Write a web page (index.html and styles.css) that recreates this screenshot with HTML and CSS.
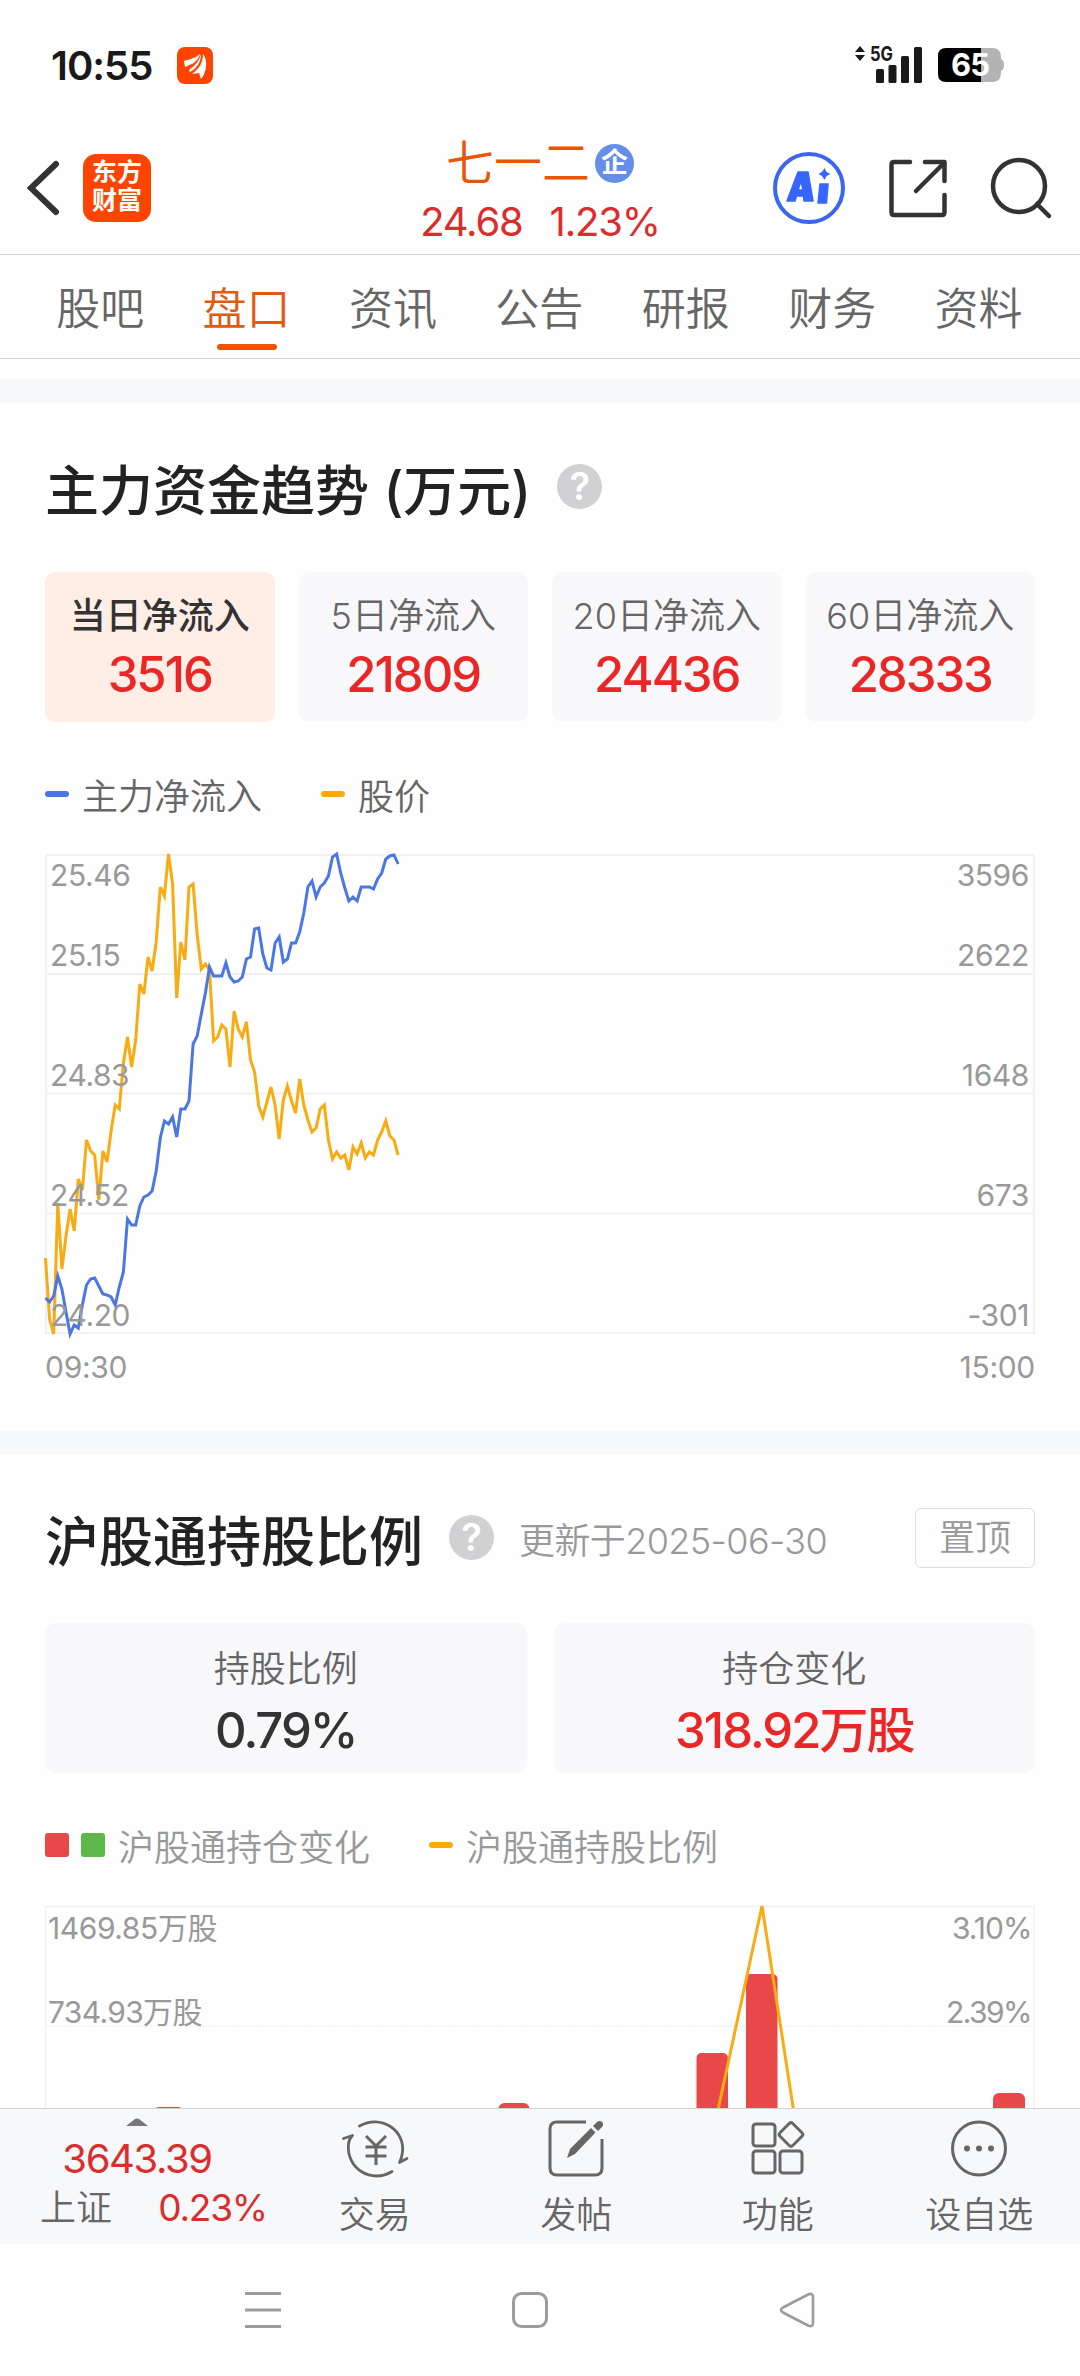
FILE: index.html
```html
<!DOCTYPE html>
<html lang="zh-CN">
    <head>
        <meta charset="UTF-8">
        <meta name="viewport" content="width=device-width, initial-scale=1.0">
        <title>七一二 - 盘口</title>
        <link rel="stylesheet" href="styles.css">
    </head>
    <body>
        <div class="status-bar">
            <div class="status-left">
                <span class="clock">10:55</span>
                <svg class="app-badge" width="36" height="37" viewBox="0 0 36 37">
                    <rect width="36" height="37" rx="8" fill="#ff4400"/>
                    <path d="M7 14 C13 12 19 11 23 7 C21 15 15 17 8 20 Z" fill="#fff"/>
                    <path d="M24 7 C24 15 20 21 13 25 C12 24 12 23 13 22 C19 18 22 14 24 7 Z" fill="#fff"/>
                    <path d="M26 7 C31 13 30 25 24 32 L22 26 L15 27 C22 22 26 16 26 7 Z" fill="#fff"/>
                </svg>
            </div>
            <div class="status-right">
                <svg width="68" height="38" viewBox="0 0 68 38">
                    <path d="M5 0 L10 6 H0 Z M5 15 L0 9 H10 Z" fill="#1a1a1a"/>
                    <text class="net-type" x="15" y="15" textLength="23" lengthAdjust="spacingAndGlyphs">5G</text>
                    <g fill="#1a1a1a">
                        <rect x="21" y="23" width="8" height="14" rx="1.5"/>
                        <rect x="33.5" y="19" width="8" height="18" rx="1.5"/>
                        <rect x="46" y="10" width="8" height="27" rx="1.5"/>
                        <rect x="59" y="1" width="8" height="36" rx="1.5"/>
                    </g>
                </svg>
                <svg width="67" height="34" viewBox="0 0 67 34">
                    <path d="M43 0 H54 Q63 0 63 9 V11 Q66 12 66 17 Q66 22 63 23 V25 Q63 34 54 34 H43 Z" fill="#b3b3b3"/>
                    <path d="M43 0 H8 Q0 0 0 8 V26 Q0 34 8 34 H43 Z" fill="#000"/>
                    <text class="battery-text" x="32" y="28">65</text>
                </svg>
            </div>
        </div>

        <header class="header">
            <div class="header-left">
                <svg width="34" height="58" viewBox="0 0 34 58">
                    <path d="M30 5 L5 29 L30 53" fill="none" stroke="#333" stroke-width="6" stroke-linecap="round"/>
                </svg>
                <div class="logo">东方<br>财富</div>
            </div>
            <div class="stock">
                <div class="stock-name">七一二<span class="badge">企</span></div>
                <div class="stock-price"><span>24.68</span><span>1.23%</span></div>
            </div>
            <div class="header-right">
                <svg width="74" height="74" viewBox="0 0 74 74">
                    <circle cx="37" cy="37" r="34" fill="none" stroke="#3b66f0" stroke-width="4"/>
                    <path d="M26 21 H36 L41 50 H32 L31.5 45 H24.5 L23 50 H15 Z M29 30 L26 39 H31 Z" fill="#3765ff" fill-rule="evenodd" stroke="#3765ff" stroke-width="1.5" stroke-linejoin="round"/>
                    <path d="M48 33 H56 L54.5 52 H46 Z" fill="#3765ff" stroke="#3765ff" stroke-width="1.5" stroke-linejoin="round"/>
                    <path d="M52.5 17 L54.5 21 L58.5 23 L54.5 25 L52.5 29 L50 25 L46.5 23 L50 21 Z" fill="#3765ff"/>
                </svg>
                <svg width="60" height="60" viewBox="0 0 60 60">
                    <g fill="none" stroke="#333" stroke-width="4.5" stroke-linecap="round" stroke-linejoin="round">
                        <path d="M22 4 H6 Q3.5 4 3.5 7 V54 Q3.5 57 6 57 H54 Q56.5 57 56.5 54 V37"/>
                        <path d="M37 4 H56.5 V23"/>
                        <path d="M56 5 L28 33"/>
                    </g>
                </svg>
                <svg width="62" height="62" viewBox="0 0 62 62">
                    <g fill="none" stroke="#333" stroke-width="4.5" stroke-linecap="round">
                        <circle cx="29" cy="29" r="26"/>
                        <path d="M47 47 L59 59"/>
                    </g>
                </svg>
            </div>
        </header>

        <nav class="tabs">
            <span class="tab">股吧</span>
            <span class="tab active">盘口</span>
            <span class="tab">资讯</span>
            <span class="tab">公告</span>
            <span class="tab">研报</span>
            <span class="tab">财务</span>
            <span class="tab">资料</span>
        </nav>

        <main class="content">
            <section class="section">
                <div class="section-head">
                    <h2>主力资金趋势 (万元)</h2>
                    <span class="help">?</span>
                </div>
                <div class="cards cards-4">
                    <div class="card selected">
                        <div class="card-label">当日净流入</div>
                        <div class="card-value">3516</div>
                    </div>
                    <div class="card">
                        <div class="card-label">5日净流入</div>
                        <div class="card-value">21809</div>
                    </div>
                    <div class="card">
                        <div class="card-label">20日净流入</div>
                        <div class="card-value">24436</div>
                    </div>
                    <div class="card">
                        <div class="card-label">60日净流入</div>
                        <div class="card-value">28333</div>
                    </div>
                </div>
                <div class="legend">
                    <i class="dash blue"></i><span>主力净流入</span>
                    <i class="dash orange second"></i><span>股价</span>
                </div>
                <svg class="chart" width="990" height="481" viewBox="0 0 990 481">
                    <g class="grid">
                        <rect x="1" y="1" width="988" height="478"/>
                        <path d="M1 120 H989 M1 239.5 H989 M1 359.5 H989"/>
                    </g>
                    <polyline id="priceLine" class="line" stroke="#f9ab12"/>
                    <polyline id="flowLine" class="line" stroke="#4a76e6"/>
                    <g class="axis-text">
                        <text x="5" y="32">25.46</text>
                        <text x="5" y="112">25.15</text>
                        <text x="5" y="232">24.83</text>
                        <text x="5" y="352">24.52</text>
                        <text x="5" y="472">24.20</text>
                    </g>
                    <g class="axis-text end">
                        <text x="984" y="32">3596</text>
                        <text x="984" y="112">2622</text>
                        <text x="984" y="232">1648</text>
                        <text x="984" y="352">673</text>
                        <text x="984" y="472">-301</text>
                    </g>
                </svg>
                <div class="time-axis"><span>09:30</span><span>15:00</span></div>
            </section>

            <section class="section">
                <div class="section-head">
                    <h2>沪股通持股比例</h2>
                    <span class="help">?</span>
                    <span class="updated">更新于2025-06-30</span>
                    <button class="pin">置顶</button>
                </div>
                <div class="cards cards-2">
                    <div class="card">
                        <div class="card-label">持股比例</div>
                        <div class="card-value dark">0.79%</div>
                    </div>
                    <div class="card">
                        <div class="card-label">持仓变化</div>
                        <div class="card-value">318.92万股</div>
                    </div>
                </div>
                <div class="legend light">
                    <i class="square red"></i><i class="square green"></i><span>沪股通持仓变化</span>
                    <i class="dash orange second"></i><span>沪股通持股比例</span>
                </div>
                <svg class="chart" width="990" height="360" viewBox="0 0 990 360">
                    <g class="grid thin">
                        <rect x="0.5" y="1.5" width="988.5" height="400"/>
                        <path d="M1 121 H989" stroke-dasharray="2 1"/>
                    </g>
                    <g fill="#e84848">
                        <rect x="108" y="202" width="31" height="60" rx="6"/>
                        <rect x="453.5" y="198" width="31" height="60" rx="6"/>
                        <rect x="651.5" y="148" width="31.5" height="200" rx="5"/>
                        <rect x="701" y="69" width="31.5" height="280" rx="5"/>
                        <rect x="948" y="188" width="32" height="100" rx="6"/>
                    </g>
                    <polyline class="line" stroke="#f9ab12" points="673,205 717,1 748.5,205"/>
                    <g class="axis-text">
                        <text x="3" y="34" textLength="169">1469.85万股</text>
                        <text x="3" y="118" textLength="154">734.93万股</text>
                    </g>
                    <g class="axis-text end">
                        <text x="987" y="34" textLength="80">3.10%</text>
                        <text x="987" y="118" textLength="86">2.39%</text>
                    </g>
                </svg>
            </section>
        </main>

        <footer class="toolbar">
            <div class="index">
                <svg width="22" height="8" viewBox="0 0 22 8"><path d="M0 8 L9 1 Q11 0 13 1 L22 8 Z" fill="#77777b"/></svg>
                <div class="index-value">3643.39</div>
                <div class="index-row"><span>上证</span><span class="up">0.23%</span></div>
            </div>
            <div class="tool">
                <svg width="66" height="60" viewBox="0 0 66 60">
                    <g fill="none" stroke="#666" stroke-width="2.8" stroke-linecap="round" stroke-linejoin="round">
                        <path d="M17.5 7 C39 -5 63 11 60.5 33 Q60 38 57.5 43.5 L65 39.5"/>
                        <path d="M50 52.5 C30 65 4 50 6.5 25 Q7 20 10.5 16.5 L1.5 19.5"/>
                    </g>
                    <path d="M24 17 L34 27 L44 17 M23.5 28 H44.5 M23.5 37 H44.5 M34 27 V46" fill="none" stroke="#666" stroke-width="3"/>
                </svg>
                <span>交易</span>
            </div>
            <div class="tool">
                <svg width="58" height="60" viewBox="0 0 58 60">
                    <path d="M39 3 H10 Q3 3 3 10 V49 Q3 56 10 56 H48 Q55 56 55 49 V20" fill="none" stroke="#666" stroke-width="3"/>
                    <path d="M44 9 L48.5 13.5 L28 35 L20 39 L23 30 Z" fill="#666"/>
                    <path d="M46 7 L50 3 Q53 1 55.5 3.5 Q57 6 54.5 8.5 L51 12 Z" fill="#666"/>
                </svg>
                <span>发帖</span>
            </div>
            <div class="tool">
                <svg width="56" height="60" viewBox="0 0 56 60">
                    <g fill="none" stroke="#666" stroke-width="3">
                        <rect x="3" y="5" width="22" height="22" rx="3"/>
                        <rect x="3" y="32" width="22" height="22" rx="3"/>
                        <rect x="30" y="32" width="22" height="22" rx="3"/>
                        <rect x="32" y="6.5" width="18" height="18" rx="2.5" transform="rotate(45 41 15.5)"/>
                    </g>
                </svg>
                <span>功能</span>
            </div>
            <div class="tool">
                <svg width="58" height="60" viewBox="0 0 58 60">
                    <circle cx="29" cy="29.5" r="26.5" fill="none" stroke="#666" stroke-width="3"/>
                    <g fill="#666">
                        <circle cx="17" cy="29.5" r="3"/>
                        <circle cx="29" cy="29.5" r="3"/>
                        <circle cx="41" cy="29.5" r="3"/>
                    </g>
                </svg>
                <span>设自选</span>
            </div>
        </footer>

        <div class="system-nav">
            <svg width="36" height="36" viewBox="0 0 36 36"><path d="M0 1.5 H36 M0 18 H36 M0 34.5 H36" stroke="#9c9c9c" stroke-width="3"/></svg>
            <svg width="36" height="36" viewBox="0 0 36 36"><rect x="1.5" y="1.5" width="33" height="33" rx="8" fill="none" stroke="#9c9c9c" stroke-width="3"/></svg>
            <svg width="36" height="36" viewBox="0 0 36 36"><path d="M4 15.5 L29 2.5 Q34 0.5 34 5 V31 Q34 35.5 29 33.5 L4 20.5 Q0 18 4 15.5 Z" fill="none" stroke="#9c9c9c" stroke-width="2.6"/></svg>
        </div>

        <script>
        // 每分钟一个点，全天 241 个点
        const STEP = 4.1;

        const price = [
            404, 465, 480, 349, 415, 382, 355, 377, 325, 336, 286, 297, 301, 346, 297,
            308, 277, 251, 255, 209, 183, 213, 186, 130, 140, 103, 117, 88, 33, 42,
            0, 30, 144, 88, 106, 33, 30, 81, 115, 110, 116, 187, 183, 171, 175,
            213, 157, 175, 183, 168, 206, 218, 252, 263, 248, 233, 251, 285, 246, 232,
            247, 259, 225, 251, 266, 278, 274, 255, 251, 286, 305, 298, 304, 301, 316,
            293, 300, 289, 304, 298, 301, 286, 278, 267, 282, 286, 301
        ];
        const flow = [
            444, 448, 442, 422, 435, 458, 480, 471, 474, 451, 431, 425, 424, 432, 440,
            441, 443, 451, 433, 418, 365, 371, 371, 352, 343, 341, 337, 317, 284, 267,
            270, 263, 283, 255, 255, 247, 190, 182, 160, 139, 113, 122, 122, 122, 109,
            123, 128, 127, 123, 105, 103, 75, 74, 100, 114, 116, 89, 83, 108, 105,
            89, 89, 78, 59, 33, 27, 43, 33, 29, 22, 3, 0, 19, 34, 47,
            43, 47, 33, 33, 33, 35, 25, 19, 5, 2, 1, 10
        ];

        function draw(id, values) {
            const points = values.map((y, i) => (0.5 + i * STEP).toFixed(1) + ',' + y);
            document.getElementById(id).setAttribute('points', points.join(' '));
        }

        draw('priceLine', price);
        draw('flowLine', flow);
        </script>
    </body>
</html>
```
FILE: styles.css
```css
* {
    box-sizing: border-box;
}
body {
    margin: 0;
    width: 1080px;
    height: 2376px;
    display: flex;
    flex-direction: column;
    overflow: hidden;
    background: #fefefe;
    color: #666;
    font-family: Inter, "Noto Sans CJK SC", sans-serif;
    font-size: 36px;
    font-weight: 350;
}
svg {
    display: block;
    flex: none;
    overflow: visible;
}

/* status bar */
.status-bar {
    height: 130px;
    display: flex;
    justify-content: space-between;
    align-items: center;
    padding: 0 75px 0 51px;
}
.status-left, .status-right {
    display: flex;
    align-items: center;
}
.status-left {
    gap: 25px;
}
.status-right {
    gap: 15px;
}
.clock {
    color: #1a1a1a;
    font-size: 40px;
    font-weight: 600;
    letter-spacing: -1px;
}
.net-type {
    font-size: 20px;
    font-weight: 700;
    fill: #1a1a1a;
}
.battery-text {
    font-size: 31px;
    font-weight: 700;
    fill: #fff;
    text-anchor: middle;
    letter-spacing: -1px;
}

/* header */
.header {
    height: 125px;
    display: grid;
    grid-template-columns: 1fr auto 1fr;
    grid-template-rows: 115px;
    align-items: center;
    border-bottom: 1px solid #d6d6d6;
}
.header-left {
    display: flex;
    align-items: center;
    gap: 23px;
    padding-left: 26px;
}
.logo {
    width: 68px;
    height: 68px;
    padding-top: 4px;
    border-radius: 13px;
    background: #ff4400;
    color: #fff;
    font-size: 25px;
    font-weight: 700;
    line-height: 28px;
    text-align: center;
}
.stock {
    align-self: start;
    padding-top: 3px;
    text-align: center;
}
.stock-name {
    display: flex;
    align-items: center;
    justify-content: center;
    color: #ea5504;
    font-size: 48px;
    line-height: 60px;
}
.badge {
    width: 39px;
    height: 39px;
    margin-left: 5px;
    border-radius: 50%;
    background: #648ee8;
    color: #fff;
    font-size: 27px;
    font-weight: 700;
    line-height: 38px;
}
.stock-price {
    display: flex;
    justify-content: center;
    gap: 27px;
    color: #dc2d2d;
    font-size: 40px;
    font-weight: 400;
    line-height: 58px;
    letter-spacing: -1.2px;
}
.header-right {
    display: flex;
    align-items: center;
    justify-content: flex-end;
    gap: 42px;
    padding-right: 28px;
}

/* tabs */
.tabs {
    height: 104px;
    display: grid;
    grid-template-columns: repeat(7, 146.4px);
    padding-left: 27px;
    border-bottom: 1px solid #d6d6d6;
}
.tab {
    position: relative;
    height: 103px;
    font-size: 44px;
    line-height: 109px;
    text-align: center;
}
.tab.active {
    color: #e05a10;
}
.tab.active::after {
    content: "";
    position: absolute;
    left: 44px;
    bottom: 8px;
    width: 60px;
    height: 6px;
    border-radius: 3px;
    background: #ea5504;
}

/* sections */
.content {
    flex: 1;
    min-height: 0;
    overflow: hidden;
    padding-top: 20px;
}
.section {
    padding: 0 45px;
    border-top: 24px solid #f7f8fa;
}
.section-head {
    height: 169px;
    display: flex;
    align-items: center;
    padding-top: 5px;
}
h2 {
    margin: 0;
    padding-top: 4px;
    color: #222;
    font-size: 54px;
    font-weight: 500;
    line-height: 60px;
}
.help {
    width: 45px;
    height: 45px;
    margin: 0 0 8px 26px;
    border-radius: 50%;
    background: #d1d1d3;
    color: #fefefe;
    font-size: 38px;
    font-weight: 600;
    line-height: 45px;
    text-align: center;
}
.updated {
    margin: 0 0 6px 25px;
    color: #999;
    letter-spacing: -0.6px;
}
.pin {
    width: 120px;
    height: 60px;
    margin: 0 0 6px auto;
    padding: 0;
    border: 1px solid #ddd;
    border-radius: 6px;
    background: none;
    color: #999;
    font: inherit;
    line-height: 58px;
}
.cards {
    display: grid;
    gap: 24px;
}
.cards-4 {
    grid-template-columns: repeat(4, 1fr);
}
.cards-2 {
    grid-template-columns: repeat(2, 1fr);
    gap: 27px;
}
.card {
    height: 150px;
    padding-top: 14px;
    border-radius: 11px;
    background: #f8f8fa;
    text-align: center;
    white-space: nowrap;
}
.cards-2 .card {
    padding-top: 16px;
}
.card.selected {
    background: #feeee6;
}
.card-label {
    line-height: 60px;
}
.selected .card-label {
    color: #333;
    font-weight: 500;
}
.card-value {
    color: #ea2626;
    font-size: 49px;
    font-weight: 500;
    line-height: 58px;
    letter-spacing: -2px;
}
.cards-2 .card-value {
    line-height: 63px;
}
.card-value.dark {
    color: #333;
}
.legend {
    height: 132px;
    display: flex;
    align-items: center;
    padding-top: 12px;
}
.legend span {
    margin-left: 13px;
}
.dash {
    width: 24px;
    height: 6px;
    border-radius: 3px;
}
.dash.second {
    margin-left: 59px;
}
.legend.light {
    color: #999;
}
.square {
    width: 24px;
    height: 24px;
    border-radius: 3px;
}
.square + .square {
    margin-left: 12px;
}
.blue {
    background: #4a76e6;
}
.orange {
    background: #ffa80b;
}
.red {
    background: #e84848;
}
.green {
    background: #5cb848;
}

/* charts */
.grid {
    fill: none;
    stroke: #f1f1f1;
    stroke-width: 2;
}
.grid.thin {
    stroke-width: 1.5;
}
.line {
    fill: none;
    stroke-width: 3;
}
.axis-text {
    fill: #999;
    font-size: 30px;
    font-weight: 400;
    letter-spacing: -0.4px;
}
.axis-text.end {
    text-anchor: end;
}
.time-axis {
    display: flex;
    justify-content: space-between;
    padding-bottom: 31px;
    color: #999;
    font-size: 30px;
    font-weight: 400;
    line-height: 64px;
    letter-spacing: -0.3px;
}

/* bottom toolbar */
.toolbar {
    height: 136px;
    display: flex;
    border-top: 1px solid #d0d2d4;
    background: #f7f8fa;
}
.index {
    width: 274px;
    display: flex;
    flex-direction: column;
    align-items: center;
    padding-top: 9px;
}
.index-value {
    color: #dc2d2d;
    font-size: 40px;
    font-weight: 400;
    line-height: 66px;
    letter-spacing: -1.4px;
}
.index-row {
    align-self: stretch;
    display: flex;
    justify-content: space-between;
    padding: 0 7px 0 40px;
    line-height: 32px;
}
.index-row .up {
    color: #dc2d2d;
    font-size: 37px;
    font-weight: 400;
    letter-spacing: -1.2px;
}
.tool {
    width: 201.5px;
    display: flex;
    flex-direction: column;
    align-items: center;
    padding-top: 10px;
    line-height: 73px;
}

/* android navigation */
.system-nav {
    height: 132px;
    display: flex;
    gap: 231px;
    padding: 48px 0 0 245px;
}
```
